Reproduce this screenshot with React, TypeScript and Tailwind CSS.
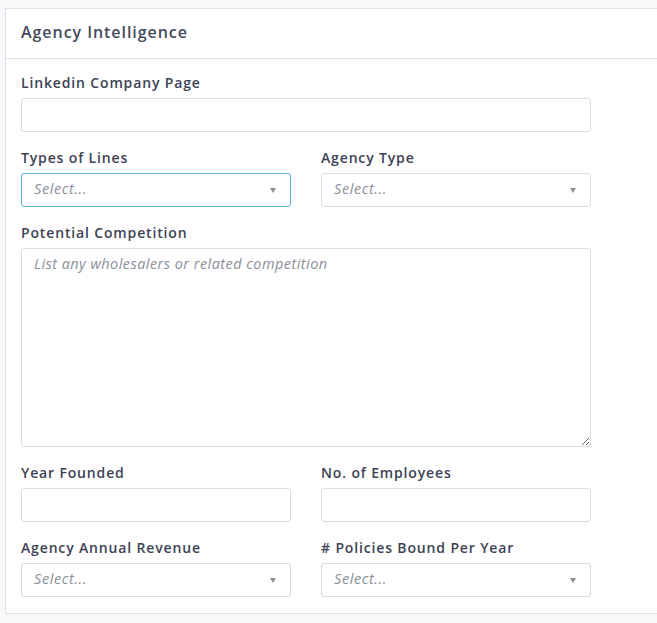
import type { ReactNode } from 'react';

const font = { fontFamily: '"Open Sans", Lato, sans-serif' };

function Field({ label, children }: { label: string; children: ReactNode }) {
  return (
    <div className="flex flex-col">
      <label className="mb-[6px] text-[14px] leading-[18px] font-semibold tracking-[0.85px] text-[#3d4255]">
        {label}
      </label>
      {children}
    </div>
  );
}

function TextInput() {
  return (
    <input
      type="text"
      className="h-[34px] w-full rounded-[3px] border border-[#d8dce3] bg-white px-3 text-[14px] text-[#333] outline-none"
    />
  );
}

function SelectBox({ focused = false }: { focused?: boolean }) {
  return (
    <div
      className={
        focused
          ? 'flex h-[34px] w-full items-center justify-between rounded-[3px] border border-[#5fb3dc] bg-white pb-[2px] pl-3 pr-[14px]'
          : 'flex h-[34px] w-full items-center justify-between rounded-[3px] border border-[#d8dce3] bg-white pb-[2px] pl-3 pr-[14px]'
      }
    >
      <span className="text-[14.5px] italic tracking-[0.6px] text-[#8a8f9a]">Select...</span>
      <span className="mt-[2px] h-0 w-0 border-x-[3px] border-t-[5px] border-x-transparent border-t-[#8e8e8e]" />
    </div>
  );
}

export default function App() {
  return (
    <div className="h-[623px] w-[657px] overflow-hidden bg-[#f7f8fa] pt-[8px] pl-[5px]" style={font}>
      <div className="w-[680px] border border-[#dde1e7] bg-white">
        {/* Card header */}
        <div className="flex h-[50px] items-center border-b border-[#dde1e7] px-[15px] pb-[3px]">
          <h2 className="text-[16px] font-semibold tracking-[0.95px] text-[#454a5c]">Agency Intelligence</h2>
        </div>

        {/* Form body */}
        <div className="flex w-[600px] flex-col gap-[17px] px-[15px] pt-[15px] pb-[16px]">
          <Field label="Linkedin Company Page">
            <TextInput />
          </Field>

          <div className="grid grid-cols-2 gap-x-[30px]">
            <Field label="Types of Lines">
              <SelectBox focused />
            </Field>
            <Field label="Agency Type">
              <SelectBox />
            </Field>
          </div>

          <Field label="Potential Competition">
            <textarea
              placeholder="List any wholesalers or related competition"
              className="h-[199px] w-full resize-y rounded-[3px] border border-[#d8dce3] bg-white px-3 py-[5px] text-[14.5px] leading-[20px] tracking-[0.45px] text-[#333] outline-none placeholder:italic placeholder:text-[#8a8f9a]"
            />
          </Field>

          <div className="grid grid-cols-2 gap-x-[30px]">
            <Field label="Year Founded">
              <TextInput />
            </Field>
            <Field label="No. of Employees">
              <TextInput />
            </Field>
          </div>

          <div className="grid grid-cols-2 gap-x-[30px]">
            <Field label="Agency Annual Revenue">
              <SelectBox />
            </Field>
            <Field label="# Policies Bound Per Year">
              <SelectBox />
            </Field>
          </div>
        </div>
      </div>
    </div>
  );
}
